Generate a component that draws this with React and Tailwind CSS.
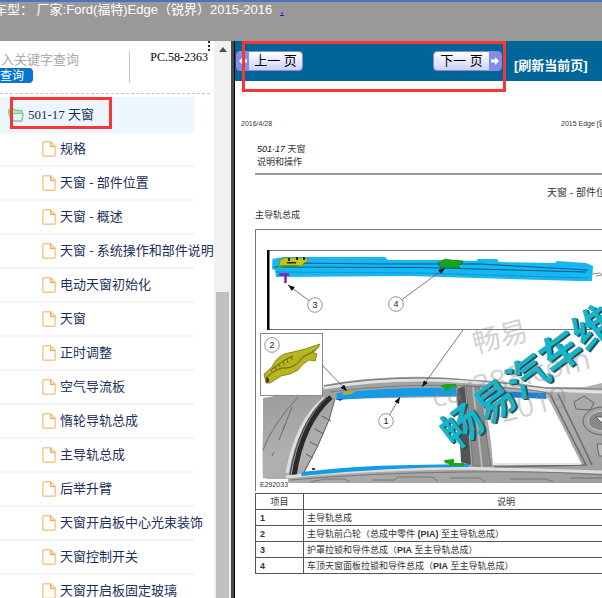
import React, { useState } from 'react';

const TREE_ITEMS = [
  '规格',
  '天窗 - 部件位置',
  '天窗 - 概述',
  '天窗 - 系统操作和部件说明',
  '电动天窗初始化',
  '天窗',
  '正时调整',
  '空气导流板',
  '惰轮导轨总成',
  '主导轨总成',
  '后举升臂',
  '天窗开启板中心光束装饰',
  '天窗控制开关',
  '天窗开启板固定玻璃',
];

const PARTS = [
  { id: 1, name: '主导轨总成' },
  { id: 2, name: <>主导轨前凸轮（总成中零件 <b>(PIA)</b> 至主导轨总成）</> },
  { id: 3, name: <>护罩拉锁和导件总成（<b>PIA</b> 至主导轨总成）</> },
  { id: 4, name: <>车顶天窗面板拉锁和导件总成（<b>PIA</b> 至主导轨总成）</> },
];

function FolderIcon() {
  return (
    <svg className="shrink-0" width="16" height="14" viewBox="0 0 16 14" fill="none" stroke="#7fcf83" strokeWidth="1.6" strokeLinejoin="round" aria-hidden="true">
      <path d="M3.4 12.6 L1 5.5 V2 Q1 1 2 1 H5.5 L7 2.6 H13 Q14 2.6 14 3.6 V5" />
      <path d="M3.4 12.6 V6 Q3.400 5.200 4.200 5.200 H14.200 Q15.200 5.200 15 6.200 L14 12 Q13.800 13 12.800 13 H4 Q3.400 13 3.400 12.600 Z" />
    </svg>
  );
}

function FileIcon() {
  return (
    <svg className="shrink-0" width="14" height="16" viewBox="0 0 14 16" fill="none" stroke="#f9c88d" strokeWidth="1.5" strokeLinejoin="round" aria-hidden="true">
      <path d="M2 0.8 H8.6 L13.2 5.4 V14 Q13.2 15.2 12 15.2 H2 Q0.8 15.2 0.8 14 V2 Q0.8 0.8 2 0.8 Z" />
      <path d="M8.6 1 V5.4 H13" stroke="#f5a850" strokeWidth="1.2" />
    </svg>
  );
}

function Sidebar() {
  const [keyword, setKeyword] = useState('');

  return (
    <aside className="flex w-[235px] shrink-0 border-r border-black bg-white">
      <div className="w-[214px] shrink-0 overflow-hidden">
        {/* Search */}
        <div className="mr-1 flex h-[53px] border-b border-dashed border-[#c4c4c4] pt-2.5">
          <form className="flex h-8 w-[130px] shrink-0 flex-col border-r border-[#c8c8c8]" onSubmit={(e) => e.preventDefault()}>
            <input
              type="text"
              aria-label="入关键字查询"
              placeholder="入关键字查询"
              value={keyword}
              onChange={(e) => setKeyword(e.target.value)}
              className="h-[17px] w-full pl-px text-[13px] leading-4 outline-none placeholder:text-[#a9a9a9]"
            />
            <button type="submit" className="flex h-[15px] w-[33px] items-center rounded-r bg-[#0674d2] text-xs leading-3 text-white">
              查询
            </button>
          </form>
          <span className="flex-1 text-right font-['Liberation_Serif',serif] text-xs leading-3 text-black">PC.58-2363</span>
          <span className="-mt-2.5 h-2.5 w-0.5 shrink-0 border-r-2 border-dotted border-[#1b3058]" />
        </div>

        {/* Tree */}
        <nav className="pt-[3px] font-['Liberation_Serif','Noto_Sans_CJK_SC',serif] text-[13px] text-[#1b3058]">
          <a href="#root" className="relative flex h-9 w-[194px] items-center gap-1 bg-[#ebf6ff] pl-2">
            <FolderIcon />
            501-17 天窗
            <span className="absolute left-2.5 top-0 h-8 w-[102px] border-[3px] border-[#fb3535]" />
          </a>
          <ul>
            {TREE_ITEMS.map((item) => (
              <li key={item} className="h-[34px] w-[194px] border-b-2 border-[#f4f4f4]">
                <a href="#item" className="flex h-[31px] items-center gap-1 whitespace-nowrap pl-[42px]">
                  <FileIcon />
                  <span className="shrink-0">{item}</span>
                </a>
              </li>
            ))}
          </ul>
        </nav>
      </div>

      {/* Scrollbar */}
      <div className="flex flex-1 flex-col border-r-[3px] border-[#4a4a4a] bg-[#f1f1f1]">
        <svg className="mx-auto mt-1.5 shrink-0" width="8" height="5" viewBox="0 0 8 5" aria-hidden="true">
          <path d="M0 5 L4 0 L8 5 Z" fill="#505050" />
        </svg>
        <div className="mx-0.5 mt-60 flex-1 bg-[#c1c1c1]" />
      </div>
    </aside>
  );
}

function PageArrow({ back }) {
  return (
    <span className="flex w-3 items-center justify-center bg-[#7f8fe8]">
      <svg width="8" height="8" viewBox="0 0 8 8" fill="#fff" aria-hidden="true">
        {back ? <path d="M0 4 L4 0 V2.5 H8 V5.5 H4 V8 Z" /> : <path d="M8 4 L4 0 V2.5 H0 V5.5 H4 V8 Z" />}
      </svg>
    </span>
  );
}

function PageBar() {
  return (
    <div className="relative flex h-10 items-start bg-[#006699] pt-2.5 pl-px">
      <button className="flex h-5 w-[67px] shrink-0 rounded-sm border border-[#8f8bd0] bg-linear-to-b from-white to-[#cdd2f8] text-[13px] leading-[18px] text-black">
        <PageArrow back />
        <span className="flex-1">上一 页</span>
      </button>
      <button className="ml-[130px] flex h-5 w-[69px] shrink-0 rounded-sm border border-[#8f8bd0] bg-linear-to-b from-white to-[#cdd2f8] text-[13px] leading-[18px] text-black">
        <span className="flex-1">下一 页</span>
        <PageArrow />
      </button>
      <a href="#reload" className="ml-3 whitespace-nowrap pt-[7px] text-[13px] leading-4 font-bold text-white">[刷新当前页]</a>
      <span className="pointer-events-none absolute left-[7px] top-0 h-[51px] w-[264px] border-[3px] border-[#fb3535]" />
    </div>
  );
}

function Callout({ x, y, n }) {
  return (
    <g>
      <circle cx={x} cy={y} r="7.3" fill="#fff" stroke="#777" strokeWidth="0.8" />
      <text x={x} y={y + 3} textAnchor="middle" fontSize="9" fill="#222">{n}</text>
    </g>
  );
}

function SunroofDiagram() {
  return (
    <svg className="block" width="454" height="262" viewBox="255 229 454 262" fontFamily="Liberation Sans, Noto Sans CJK SC, sans-serif" role="img" aria-label="主导轨总成">
      <defs>
        <linearGradient id="body" x1="0" y1="0" x2="1" y2="1">
          <stop offset="0" stopColor="#979797" />
          <stop offset="0.4" stopColor="#b0b0b0" />
          <stop offset="1" stopColor="#999" />
        </linearGradient>
        <marker id="tip" viewBox="0 0 8 6" refX="8" refY="3" markerWidth="7" markerHeight="5" markerUnits="userSpaceOnUse" orient="auto">
          <path d="M0 0 L8 3 L0 6 Z" fill="#111" />
        </marker>
      </defs>
      <path d="M255.5 491 V229.5 H709" fill="none" stroke="#777" />
      <path d="M267 250.5 H709 M267 329.5 H709" fill="none" stroke="#777" />
      <rect x="267" y="250" width="2.500" height="80" fill="#000" />

      {/* Rail detail */}
      <path d="M272.500 259 L283 257 L385 257 L388 260 L440 260 L476 261 L478 259 L497 259 L499 262 L555 263 L557 261 L586 263 L593 266 L592 281 L580 281 L410 276 L276 277 L275 270 L272 269 Z" fill="#16b8f3" />
      <path d="M283 263 L390 264 L480 264 L588 270 M274 267 L420 267.500 L586 272" fill="none" stroke="#064f76" strokeWidth="0.9" />
      <path d="M276 272 L420 273 L588 278" fill="none" stroke="#0787be" strokeWidth="0.7" />
      <path d="M592 274 L600 273 L602 275 L596 276" fill="none" stroke="#888" />
      <path d="M280 260 L284 258 L305 258 L309 260 L303 264 L302 266 L285 266 L279 268 Z" fill="#c7c614" stroke="#68800b" strokeWidth="0.6" />
      <path d="M288 258 h2 v3 h-2z M296 257 h2 v3 h-2z M303 257 h2 v3 h-2z M287 262 h9 v1.500 h-9z" fill="#222" />
      <path d="M280 266 H299" stroke="#299b2e" strokeWidth="1.5" />
      <path d="M279 274.500 H289 M285.500 275 V283" stroke="#8d1f9c" strokeWidth="2.5" />
      <path d="M438 263 L445 259 L451 260 L463 261 L462 264 L458 265 L460 268 L454 268 L448 267 L440 267 Z" fill="#18a51e" stroke="#0b6f13" strokeWidth="0.6" />

      {/* Car roof */}
      <path d="M263 398 L275 396 H322 L324 385 Q360 378 402 377 Q440 376 469 380 Q510 381 545 387 L585 387 L602 383 H709 V483 H290 L263 478 Q262 458 263 430 Z" fill="url(#body)" />
      <path d="M324 388 Q370 380 420 380 T545 390 L602 392" fill="none" stroke="#e1e1e1" strokeWidth="3" />
      <path d="M324 386 Q370 378 420 378 T545 388 L602 389 M330 392 Q400 383 470 386 T550 394" fill="none" stroke="#707070" strokeWidth="0.8" />
      <path d="M325 398 Q297 420 287 473" fill="none" stroke="#dedede" strokeWidth="3" />
      <path d="M331 397 Q302 423 294 476" fill="none" stroke="#2a2a2a" strokeWidth="5" />
      <path d="M327 397 Q299 421 290 475" fill="none" stroke="#555" strokeWidth="1.5" />
      <path d="M298 397 Q272 425 263 450 M292 407 L279 440 M272 456 l2 -4 M283 430 l2 -5" fill="none" stroke="#666" strokeWidth="0.9" />
      <path d="M335 399 L456 397 L462 465 L400 466 L305 472 Q319 446 329 420 Z" fill="#fff" />
      <path d="M335 399 L329 420 Q319 446 304 472 M322 416 l9 5 M315 429 l9 5 M310 442 l8 4 M306 454 l7 4" fill="none" stroke="#5f5f5f" strokeWidth="1" />
      <path d="M483 398 H548 Q565 430 582 465 H493 Q491 430 483 398 Z" fill="#fff" />
      <path d="M550 394 Q565 424 586 465 L494 467 M558 394 Q578 435 592 465" fill="none" stroke="#6a6a6a" strokeWidth="1.5" />
      <path d="M494 464 H580" stroke="#e3e3e3" strokeWidth="2" />
      <path d="M457 389 L465 386 L471 465 L461 462 Z" fill="#535353" />
      <path d="M466 386 L479 387 L491 466 L473 466 Z" fill="#8c8c8c" stroke="#666" strokeWidth="0.7" />
      <path d="M473 387 L482 467" fill="none" stroke="#b8b8b8" strokeWidth="2" />
      <path d="M286 477 Q350 470 460 468 L602 472" fill="none" stroke="#ddd" strokeWidth="3" />
      <path d="M290 480 Q370 473 463 472 T602 475 M310 482 l15 -3 h20 l5 3 M372 480 h22 l4 -3 h34 l6 4 M450 478 h30 l5 4 M510 479 h36 l8 3 M570 478 h32" fill="none" stroke="#696969" strokeWidth="0.8" />
      <path d="M574 402 l10 -6 l10 7 l-4 7 l-14 -1 Z" fill="#aaa" stroke="#666" />
      <ellipse cx="603" cy="421" rx="20" ry="14" fill="#a4a4a4" stroke="#666" />
      <ellipse cx="603" cy="421" rx="15" ry="10" fill="#888" stroke="#ccc" />
      <path d="M596 417 h10 v8 l-5 -3 Z" fill="#eee" stroke="#333" strokeWidth="0.7" />
      <path d="M597 444 h12 v12 h-10 Z" fill="#bbb" stroke="#666" />

      {/* Fitted rails */}
      <path d="M337 393 Q390 387 456 388 L457 396 Q390 396 336 400 Z" fill="#149be6" />
      <path d="M486 391 L546 393 L546 399 L487 396 Z" fill="#1684d6" />
      <path d="M302 472 Q350 466 410 465 L471 464 L468 467 Q390 467 301 476 Z" fill="#149be6" />
      <path d="M344 392 l11 -1 l-3 3 l-10 1 Z" fill="#b7ad21" />
      <path d="M337 399 h6 l-3 2 Z M312 468 h3 v2 h-3 Z" fill="#671899" />
      <path d="M441 385 L447 384 H456 L457 388 H450 V391 H445 V388 L441 387 Z M444 460 L454 459 V463 H464 V466 H449 V464 L445 463 Z" fill="#18a51e" />

      {/* Cam inset */}
      <rect x="260.500" y="333.500" width="62" height="62" fill="#fff" stroke="#8a8a8a" />
      <path d="M264 374 L272 367 Q275 359 284 354 L293 352 L305 349 L320 344 L318 348 L312 352 L317 354 L315 361 L309 360 Q302 364 298 370 L290 374 L281 376 L270 383 L266 383 Z" fill="#b8b51e" stroke="#767414" strokeWidth="0.8" />
      <path d="M266 378 Q279 366 286 368 Q295 368 303 357 L316 350 M272 369 L285 360 L293 356" fill="none" stroke="#605e10" strokeWidth="1" />
      <path d="M272 372 l-1 -3 M276 370 l-1 -3 M280 367 l-1 -3 M284 365 l-1 -4 M288 363 l-1 -4 M292 360 l-1 -4" stroke="#605e10" strokeWidth="0.8" />
      <ellipse cx="267.500" cy="380" rx="1.5" ry="2.5" fill="#333" />

      <g stroke="#555" strokeWidth="0.8" fill="none">
        <path d="M315 305 L288 285" markerEnd="url(#tip)" />
        <path d="M396 304 L445 268" markerEnd="url(#tip)" />
        <path d="M463 330 L422 387" markerEnd="url(#tip)" />
        <path d="M322 365 L347 391" markerEnd="url(#tip)" />
        <path d="M386 421 L400 397" markerEnd="url(#tip)" />
      </g>
      <Callout x={315} y={305} n="3" />
      <Callout x={396} y={304} n="4" />
      <Callout x={272} y={345} n="2" />
      <Callout x={386} y={421} n="1" />

      <rect x="260" y="479" width="28" height="9" fill="#fff" />
      <text x="260" y="487" fontSize="7" fill="#333">E292033</text>

      {/* Watermarks */}
      <g fontSize="41" fontWeight="bold" transform="rotate(-37 458 450)">
        <text x="456" y="450" fill="#33484b">畅易汽车维</text>
        <text x="455" y="448" fill="#12b5cc">畅易汽车维</text>
      </g>
      <g fill="#888" fillOpacity="0.4" transform="rotate(-14 480 356)">
        <text x="476" y="352" fontSize="28">畅易</text>
        <text x="423" y="395" fontFamily="Open Sans" fontSize="30">car388.com</text>
        <text x="446" y="426" fontFamily="Open Sans" fontSize="30">QY2019</text>
      </g>
    </svg>
  );
}

function Manual() {
  return (
    <article className="w-[488px] pl-5 text-[9px] leading-3 text-[#333]">
      <div className="-ml-3.5 flex justify-between pt-[38px] text-[7px] leading-[10px]">
        <span>2016/4/28</span>
        <span className="w-[162px]">2015 Edge [锐界]</span>
      </div>
      <header className="border-b-2 border-[#999] pt-3.5 pb-[5px] pl-0.5">
        <h1><i className="text-[#111]">501-17</i> 天窗</h1>
        <p className="mt-px">说明和操作</p>
      </header>
      <h2 className="pt-3 pl-[292px] text-[10px] leading-3">天窗 - 部件位置</h2>
      <h3 className="pt-2.5 pb-2">主导轨总成</h3>
      <SunroofDiagram />
      <table className="mt-0.5 w-[454px] border-collapse text-left">
        <thead>
          <tr className="h-4">
            <th className="w-12 border border-[#555] text-center font-normal">项目</th>
            <th className="border border-[#555] text-center font-normal">说明</th>
          </tr>
        </thead>
        <tbody>
          {PARTS.map((part) => (
            <tr key={part.id} className="h-4">
              <td className="border border-[#555] pl-1 font-bold">{part.id}</td>
              <td className="border border-[#555] pl-[3px]">{part.name}</td>
            </tr>
          ))}
        </tbody>
      </table>
    </article>
  );
}

function App() {
  return (
    <div className="flex h-screen flex-col overflow-hidden bg-white font-['Liberation_Sans','Noto_Sans_CJK_SC',sans-serif]">
      {/* Header */}
      <header className="h-[41px] shrink-0 border-t-2 border-[#4c72c4] bg-[#999]">
        <p className="-ml-1.5 whitespace-nowrap text-[13px] leading-4 text-white">
          车型： 厂家:Ford(福特)Edge（锐界）2015-2016
          <a href="#more" className="ml-2 text-[#0000cc] underline">.</a>
        </p>
      </header>

      <div className="flex min-h-0 flex-1">
        <Sidebar />
        <main className="min-w-0 flex-1 overflow-hidden">
          <PageBar />
          <Manual />
        </main>
      </div>
    </div>
  );
}

export default App;
